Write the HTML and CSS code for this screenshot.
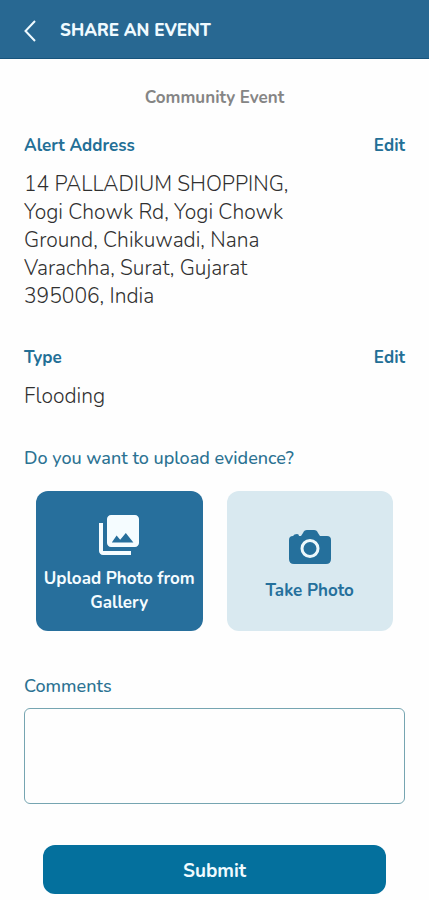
FILE: index.html
```html
<!DOCTYPE html>
<html lang="en">
<head>
<meta charset="utf-8">
<meta name="viewport" content="width=device-width, initial-scale=1">
<title>Share an Event</title>
<link rel="stylesheet" href="styles.css">
</head>
<body>
<header class="topbar">
  <button class="back" type="button" aria-label="Back">
    <svg width="12" height="22" viewBox="0 0 12 22" fill="none" stroke="currentColor" stroke-width="2"><path d="M11 1 1.5 11 11 21"/></svg>
  </button>
  <h1 class="topbar-title">SHARE AN EVENT</h1>
</header>
<main>
  <form class="form">
    <p class="kind">Community Event</p>
    <section class="field address">
      <div class="field-head">
        <h2 class="label strong">Alert Address</h2>
        <a class="label strong" href="#address">Edit</a>
      </div>
      <p class="value" id="address">14 PALLADIUM SHOPPING,<br>Yogi Chowk Rd, Yogi Chowk<br>Ground, Chikuwadi, Nana<br>Varachha, Surat, Gujarat<br>395006, India</p>
    </section>
    <section class="field type">
      <div class="field-head">
        <h2 class="label strong">Type</h2>
        <a class="label strong" href="#type">Edit</a>
      </div>
      <p class="value" id="type">Flooding</p>
    </section>
    <section class="evidence">
      <h2 class="label">Do you want to upload evidence?</h2>
      <div class="choices">
        <button class="choice primary" type="button">
          <svg class="choice-icon" width="48" viewBox="0 0 24 24" fill="currentColor"><path d="M22 16V4c0-1.100-.9-2-2-2H8c-1.100 0-2 .9-2 2v12c0 1.100.9 2 2 2h12c1.100 0 2-.9 2-2zm-13.600-.2 2.400-3.500 1.800 2.100 2.800-3.400 3.800 4.800zM2 6v14c0 1.100.9 2 2 2h14v-2H4V6H2z"/></svg>
          <span>Upload Photo from Gallery</span>
        </button>
        <button class="choice" type="button">
          <svg class="choice-icon" width="42" viewBox="0 0 42 34"><path fill="currentColor" d="M4 6q1-2 4-2 2 0 2 2h2l2-3q1-3 4-3h7q3 0 4 3l2 3h7q4 0 4 4v19q0 5-5 5H5q-5 0-5-5V10q0-4 4-4z"/><circle cx="21" cy="18.500" r="8" fill="none" stroke="#edf8fb" stroke-width="3"/></svg>
          <span>Take Photo</span>
        </button>
      </div>
    </section>
    <div class="comments">
      <label class="label" for="comments">Comments</label>
      <textarea class="box" id="comments"></textarea>
    </div>
    <button class="submit" type="submit">Submit</button>
  </form>
</main>
</body>
</html>
```
FILE: styles.css
```css
* { box-sizing: border-box; }

body {
  margin: 0;
  background: #fefefe;
  color: #303030;
  font-family: Nunito, "Open Sans", sans-serif;
}

h1, h2, p { margin: 0; }
button { border: 0; font-family: inherit; cursor: pointer; }

.topbar {
  display: flex;
  align-items: center;
  gap: 24px;
  height: 59px;
  padding: 4px 24px 0;
  background: #286892;
  border-bottom: 1px solid #17547c;
  color: #effaff;
}

.back {
  display: flex;
  padding: 0;
  background: none;
  color: inherit;
}

.topbar-title { font-size: 17px; line-height: 24px; font-weight: 800; }

.form {
  display: flex;
  flex-direction: column;
  padding: 27px 24px 6px;
}

.kind {
  color: #858585;
  font-size: 17px;
  line-height: 24px;
  font-weight: 700;
  text-align: center;
}

.field { margin-top: 24px; }
.field.type { margin-top: 36px; }
.field-head { display: flex; justify-content: space-between; }

.label {
  display: block;
  color: #2b7292;
  font-size: 18px;
  line-height: 24px;
  font-weight: 500;
  text-decoration: none;
}

.label.strong { color: #236f96; font-size: 17px; font-weight: 700; }

.value {
  margin-top: 12px;
  font-size: 21px;
  line-height: 28px;
  font-weight: 300;
}

.evidence { margin-top: 36px; }

.choices {
  display: grid;
  grid-template-columns: 1fr 1fr;
  gap: 24px;
  padding: 0 12px;
  margin-top: 21px;
}

.choice {
  display: flex;
  flex-direction: column;
  align-items: center;
  justify-content: center;
  gap: 5px;
  min-height: 140px;
  padding: 4px;
  border-radius: 12px;
  background: #d9e9f0;
  color: #25709c;
  font-size: 17px;
  line-height: 24px;
  font-weight: 700;
}

.choice.primary { background: #276f9c; color: #f5fcff; }
.choice-icon { height: 54px; }

.comments { margin-top: 43px; }

.box {
  display: block;
  width: 100%;
  height: 96px;
  margin-top: 10px;
  padding: 10px;
  border: 1px solid #76a5b1;
  border-radius: 6px;
  background: #fefefe;
  font: inherit;
  resize: none;
}

.submit {
  height: 49px;
  margin: 41px 19px 0;
  padding-top: 4px;
  border-radius: 12px;
  background: #04709d;
  color: #effaff;
  font-size: 19px;
  line-height: 24px;
  font-weight: 700;
}
```
